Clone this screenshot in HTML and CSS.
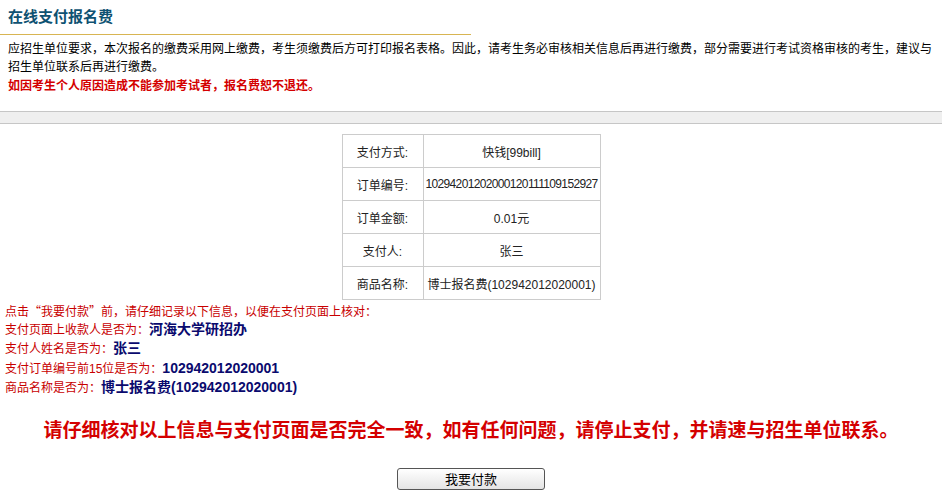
FILE: index.html
```html
<!DOCTYPE html>
<html lang="zh-CN">
<head>
    <meta charset="UTF-8" />
    <title>在线支付报名费</title>
    <link rel="stylesheet" href="styles.css">
</head>
<body>

    <div class="titulo">在线支付报名费</div>

    <div class="aviso">
        应招生单位要求，本次报名的缴费采用网上缴费，考生须缴费后方可打印报名表格。因此，请考生务必审核相关信息后再进行缴费，部分需要进行考试资格审核的考生，建议与招生单位联系后再进行缴费。
        <div class="aviso-rojo">如因考生个人原因造成不能参加考试者，报名费恕不退还。</div>
    </div>

    <div class="franja"></div>

    <table class="pedido">
        <tr>
            <td class="etiqueta">支付方式:</td>
            <td>快钱[99bill]</td>
        </tr>
        <tr>
            <td class="etiqueta">订单编号:</td>
            <td class="numero">10294201202000120111109152927</td>
        </tr>
        <tr>
            <td class="etiqueta">订单金额:</td>
            <td>0.01元</td>
        </tr>
        <tr>
            <td class="etiqueta">支付人:</td>
            <td>张三</td>
        </tr>
        <tr>
            <td class="etiqueta">商品名称:</td>
            <td>博士报名费(102942012020001)</td>
        </tr>
    </table>

    <div class="verificar">
        <div class="cjk">点击“我要付款”前，请仔细记录以下信息，以便在支付页面上核对：</div>
        <div>支付页面上收款人是否为：<b>河海大学研招办</b></div>
        <div>支付人姓名是否为：<b>张三</b></div>
        <div>支付订单编号前15位是否为：<b>102942012020001</b></div>
        <div>商品名称是否为：<b>博士报名费(102942012020001)</b></div>
    </div>

    <div class="alerta">请仔细核对以上信息与支付页面是否完全一致，如有任何问题，请停止支付，并请速与招生单位联系。</div>

    <div class="acciones">
        <button class="pagar">我要付款</button>
    </div>

</body>
</html>
```

FILE: styles.css
```css
body {
    margin: 0;
    font-family: "Liberation Sans", "Noto Sans CJK SC", sans-serif;
    font-size: 12px;
    color: #000;
    background: #fff;
}

.titulo {
    width: 471px;
    box-sizing: border-box;
    padding: 7px 8px 7px;
    line-height: 20px;
    font-size: 15px;
    font-weight: bold;
    color: #0f5272;
    border-bottom: 1px solid #d8b552;
}

.aviso {
    padding: 5px 8px 0;
    line-height: 18px;
}

.aviso-rojo {
    margin-top: 1px;
    color: #d40000;
    font-weight: bold;
}

.franja {
    margin-top: 16px;
    height: 11px;
    background-color: #efefef;
    border-top: 1px solid #c6c6c6;
    border-bottom: 1px solid #c6c6c6;
}

.pedido {
    margin: 10px auto 0;
    border-collapse: collapse;
    width: 259px;
}

.pedido td {
    border: 1px solid #cccccc;
    height: 32px;
    padding: 0;
    text-align: center;
    color: #222;
}

.pedido .etiqueta {
    width: 80px;
}

.pedido .numero {
    letter-spacing: -0.65px;
}

.verificar {
    padding: 1px 5px 0;
    line-height: 19.5px;
    color: #c80000;
}

.verificar .cjk {
    font-family: "Noto Sans CJK SC", sans-serif;
}

.verificar b {
    font-size: 14px;
    line-height: 1;
    color: #0a0a6e;
}

.alerta {
    margin-top: 20px;
    text-align: center;
    font-size: 19px;
    font-weight: bold;
    line-height: 24px;
    color: #d40000;
}

.acciones {
    margin-top: 25px;
    text-align: center;
}

.pagar {
    width: 148px;
    height: 22px;
    padding: 0;
    font-family: "Liberation Sans", "Noto Sans CJK SC", sans-serif;
    font-size: 13px;
    color: #000;
    border: 1px solid #555;
    border-radius: 3px;
    background: linear-gradient(#ffffff, #e4e4e4);
    cursor: pointer;
}
```
